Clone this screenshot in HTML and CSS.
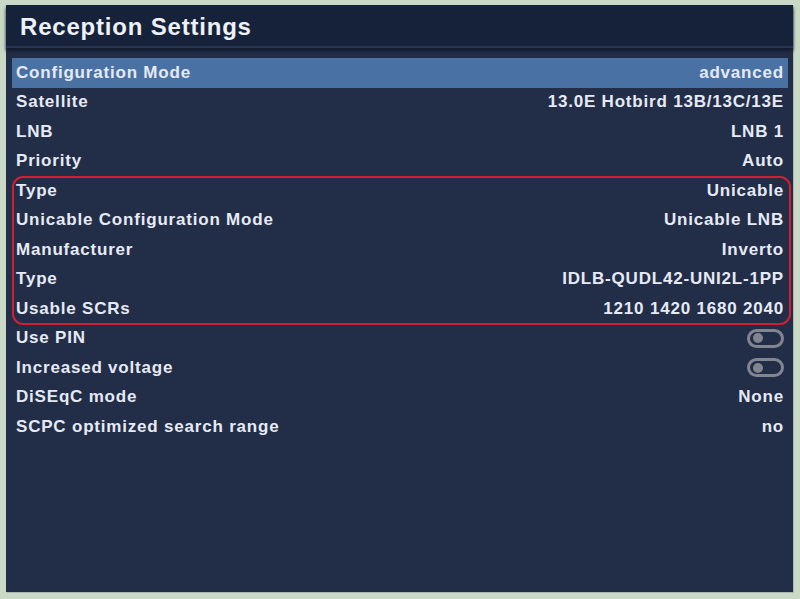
FILE: index.html
```html
<!DOCTYPE html>
<html>
<head>
<meta charset="utf-8">
<link rel="stylesheet" href="styles.css">
</head>
<body>
<div class="screen">
  <div class="header"><h1 class="title">Reception Settings</h1></div>
  <div class="list">
    <div class="row selected"><span>Configuration Mode</span><span>advanced</span></div>
    <div class="row"><span>Satellite</span><span>13.0E Hotbird 13B/13C/13E</span></div>
    <div class="row"><span>LNB</span><span>LNB 1</span></div>
    <div class="row"><span>Priority</span><span>Auto</span></div>
    <div class="group">
      <div class="row"><span>Type</span><span>Unicable</span></div>
      <div class="row"><span>Unicable Configuration Mode</span><span>Unicable LNB</span></div>
      <div class="row"><span>Manufacturer</span><span>Inverto</span></div>
      <div class="row"><span>Type</span><span>IDLB-QUDL42-UNI2L-1PP</span></div>
      <div class="row"><span>Usable SCRs</span><span>1210 1420 1680 2040</span></div>
    </div>
    <div class="row"><span>Use PIN</span><span class="toggle"></span></div>
    <div class="row"><span>Increased voltage</span><span class="toggle"></span></div>
    <div class="row"><span>DiSEqC mode</span><span>None</span></div>
    <div class="row"><span>SCPC optimized search range</span><span>no</span></div>
  </div>
</div>
</body>
</html>
```
FILE: styles.css
```css
html, body {
  margin: 0;
  padding: 0;
}
body {
  background: #c9d9c5;
  width: 800px;
  height: 599px;
  overflow: hidden;
  font-family: "Liberation Sans", Arial, sans-serif;
}
.screen {
  margin: 5px 7px 0 6px;
  height: 587px;
  background: #222d48;
  box-shadow: 1px 1px 0 #aab6b0;
}
.header {
  background: #15223a;
  border-bottom: 2px solid #253552;
  box-shadow: 0 3px 3px #131b2c;
  padding: 3px 0 0 14px;
  box-sizing: border-box;
  height: 43px;
  display: flex;
  align-items: center;
}
.title {
  margin: 0;
  font-size: 24px;
  font-weight: bold;
  color: #eef1f7;
  letter-spacing: 0.8px;
}
.list {
  padding: 10px 5px 0 6px;
}
.row {
  height: 29.5px;
  display: flex;
  align-items: center;
  justify-content: space-between;
  padding: 0 4px 0 4px;
  font-size: 17px;
  letter-spacing: 0.8px;
  font-weight: bold;
  color: #e6eaf4;
}
.row span:last-child {
  margin-right: 0;
}
.row.selected {
  background: #4a71a3;
}
.group {
  position: relative;
}
.group::after {
  content: "";
  position: absolute;
  top: 0;
  bottom: -1px;
  left: 0;
  right: -3px;
  border: 2.5px solid #d11f30;
  border-radius: 11px;
}
.toggle {
  width: 31px;
  height: 13px;
  border: 3px solid #80858f;
  border-radius: 10px;
  position: relative;
  margin-right: 2px;
}
.toggle::before {
  content: "";
  position: absolute;
  left: 3px;
  top: 1.5px;
  width: 10px;
  height: 10px;
  border-radius: 50%;
  background: #80858f;
}
```
